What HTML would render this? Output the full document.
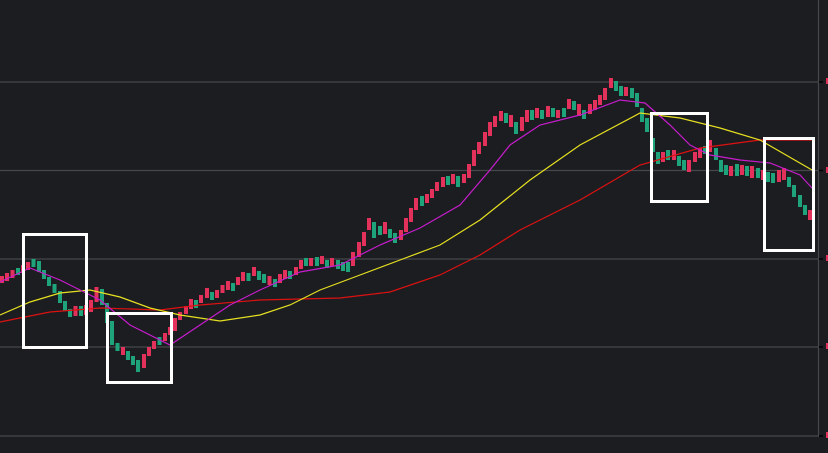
<!DOCTYPE html><html><head><style>html,body{margin:0;padding:0;background:#1c1d21;width:828px;height:453px;overflow:hidden}.r{fill:#e2315a}.g{fill:#1fa37a}</style></head><body>
<svg width="828" height="453" xmlns="http://www.w3.org/2000/svg" style="display:block">
<rect width="828" height="453" fill="#1c1d21"/>
<g stroke="#46474b" stroke-width="1.2">
<line x1="0" y1="82" x2="818" y2="82"/><line x1="0" y1="170.5" x2="818" y2="170.5"/><line x1="0" y1="259" x2="818" y2="259"/><line x1="0" y1="347" x2="818" y2="347"/><line x1="0" y1="436" x2="818" y2="436"/>
<line x1="818.5" y1="0" x2="818.5" y2="437"/></g>
<g stroke="#000" stroke-width="1.5"><line x1="819" y1="82" x2="823" y2="82"/><line x1="819" y1="170.5" x2="823" y2="170.5"/><line x1="819" y1="259" x2="823" y2="259"/><line x1="819" y1="347" x2="823" y2="347"/><line x1="819" y1="436" x2="823" y2="436"/></g>
<g fill="#e2315a"><rect x="826" y="78" width="2" height="6"/><rect x="826" y="167" width="2" height="6"/><rect x="826" y="255" width="2" height="6"/><rect x="826" y="343" width="2" height="6"/><rect x="826" y="432" width="2" height="6"/></g>
<g>
<rect class="r" x="0" y="276" width="4" height="7"/><rect class="r" x="5" y="273" width="4" height="8"/><rect class="r" x="10.5" y="270" width="4" height="8"/><rect class="g" x="16" y="268" width="4" height="7"/><rect class="r" x="21" y="265" width="4" height="8"/><rect class="r" x="26" y="262" width="4" height="8"/><rect class="g" x="31.5" y="259" width="4" height="8"/><rect class="g" x="37" y="261" width="4" height="11"/><rect class="g" x="42" y="270" width="4" height="9"/><rect class="g" x="47" y="277" width="4" height="9"/><rect class="g" x="52.5" y="284" width="4" height="9"/><rect class="g" x="58" y="291" width="4" height="12"/><rect class="g" x="63" y="301" width="4" height="10"/><rect class="g" x="68" y="309" width="4" height="8"/><rect class="r" x="73.5" y="306" width="4" height="10"/><rect class="g" x="79" y="306" width="4" height="10"/><rect class="r" x="84" y="305" width="4" height="10"/><rect class="r" x="89" y="300" width="4" height="12"/><rect class="r" x="94.5" y="287" width="4" height="15"/><rect class="g" x="100" y="289" width="4" height="16"/><rect class="g" x="105" y="303" width="4" height="20"/><rect class="g" x="110" y="321" width="4" height="24"/><rect class="g" x="115.5" y="343" width="4" height="8"/><rect class="r" x="121" y="347" width="4" height="8"/><rect class="g" x="126" y="351" width="4" height="9"/><rect class="g" x="131" y="356" width="4" height="9"/><rect class="g" x="136" y="360" width="4" height="12"/><rect class="r" x="142" y="354" width="4" height="14"/><rect class="r" x="147" y="347" width="4" height="9"/><rect class="r" x="152" y="341" width="4" height="8"/><rect class="g" x="157.5" y="337" width="4" height="8"/><rect class="r" x="163" y="333" width="4" height="8"/><rect class="r" x="168" y="327" width="4" height="8"/><rect class="r" x="173" y="318" width="4" height="13"/><rect class="r" x="178" y="312" width="4" height="8"/><rect class="r" x="184" y="306" width="4" height="8"/><rect class="r" x="189" y="299" width="4" height="10"/><rect class="g" x="194" y="300" width="4" height="8"/><rect class="r" x="199" y="295" width="4" height="8"/><rect class="r" x="205" y="288" width="4" height="10"/><rect class="g" x="210" y="292" width="4" height="8"/><rect class="r" x="215" y="290" width="4" height="8"/><rect class="r" x="220.5" y="285" width="4" height="8"/><rect class="r" x="226" y="281" width="4" height="9"/><rect class="g" x="231" y="283" width="4" height="8"/><rect class="r" x="236" y="277" width="4" height="8"/><rect class="r" x="241" y="272" width="4" height="9"/><rect class="g" x="246.5" y="273" width="4" height="8"/><rect class="r" x="252" y="267" width="4" height="9"/><rect class="g" x="257" y="271" width="4" height="9"/><rect class="g" x="262" y="274" width="4" height="9"/><rect class="r" x="267.5" y="276" width="4" height="9"/><rect class="g" x="273" y="279" width="4" height="8"/><rect class="r" x="278" y="274" width="4" height="9"/><rect class="r" x="283" y="270" width="4" height="9"/><rect class="g" x="288" y="271" width="4" height="8"/><rect class="r" x="294" y="267" width="4" height="8"/><rect class="r" x="299" y="260" width="4" height="9"/><rect class="g" x="304" y="258" width="4" height="8"/><rect class="r" x="309" y="258" width="4" height="8"/><rect class="g" x="315" y="257" width="4" height="9"/><rect class="r" x="320" y="256" width="4" height="8"/><rect class="g" x="325" y="260" width="4" height="8"/><rect class="r" x="330" y="258" width="4" height="8"/><rect class="g" x="336" y="260" width="4" height="9"/><rect class="g" x="341" y="262" width="4" height="9"/><rect class="g" x="346" y="262" width="4" height="10"/><rect class="r" x="351" y="252" width="4" height="14"/><rect class="r" x="357" y="242" width="4" height="15"/><rect class="r" x="362" y="232" width="4" height="14"/><rect class="r" x="367" y="218" width="4" height="12"/><rect class="g" x="372" y="222" width="4" height="16"/><rect class="g" x="378" y="226" width="4" height="9"/><rect class="r" x="383" y="222" width="4" height="12"/><rect class="g" x="388" y="229" width="4" height="9"/><rect class="g" x="393" y="233" width="4" height="10"/><rect class="r" x="399" y="230" width="4" height="10"/><rect class="r" x="404" y="218" width="4" height="14"/><rect class="r" x="409" y="208" width="4" height="14"/><rect class="r" x="414" y="198" width="4" height="12"/><rect class="g" x="420" y="196" width="4" height="10"/><rect class="r" x="425" y="194" width="4" height="9"/><rect class="r" x="430" y="189" width="4" height="9"/><rect class="r" x="435" y="182" width="4" height="9"/><rect class="r" x="441" y="177" width="4" height="10"/><rect class="g" x="446" y="176" width="4" height="9"/><rect class="r" x="451" y="174" width="4" height="10"/><rect class="g" x="456" y="176" width="4" height="11"/><rect class="r" x="462" y="174" width="4" height="9"/><rect class="r" x="467" y="164" width="4" height="14"/><rect class="r" x="472" y="150" width="4" height="16"/><rect class="r" x="477" y="142" width="4" height="12"/><rect class="r" x="483" y="132" width="4" height="14"/><rect class="r" x="488" y="122" width="4" height="14"/><rect class="r" x="493" y="116" width="4" height="11"/><rect class="r" x="499" y="111" width="4" height="10"/><rect class="g" x="504" y="113" width="4" height="10"/><rect class="r" x="509" y="115" width="4" height="12"/><rect class="g" x="514" y="122" width="4" height="12"/><rect class="r" x="520" y="117" width="4" height="14"/><rect class="r" x="525" y="110" width="4" height="12"/><rect class="g" x="530" y="110" width="4" height="10"/><rect class="r" x="535" y="108" width="4" height="10"/><rect class="g" x="540" y="110" width="4" height="9"/><rect class="r" x="546" y="106" width="4" height="11"/><rect class="g" x="551" y="108" width="4" height="9"/><rect class="r" x="556" y="110" width="4" height="8"/><rect class="g" x="562" y="108" width="4" height="9"/><rect class="r" x="567" y="99" width="4" height="10"/><rect class="g" x="572" y="101" width="4" height="9"/><rect class="r" x="577" y="104" width="4" height="12"/><rect class="g" x="582" y="110" width="4" height="9"/><rect class="r" x="588" y="104" width="4" height="10"/><rect class="r" x="593" y="100" width="4" height="10"/><rect class="r" x="598" y="95" width="4" height="10"/><rect class="r" x="603" y="88" width="4" height="12"/><rect class="r" x="609" y="78" width="4" height="10"/><rect class="g" x="614" y="81" width="4" height="10"/><rect class="g" x="619" y="86" width="4" height="10"/><rect class="r" x="624" y="87" width="4" height="9"/><rect class="g" x="630" y="88" width="4" height="10"/><rect class="g" x="635" y="93" width="4" height="14"/><rect class="g" x="640" y="108" width="4" height="14"/><rect class="g" x="645" y="118" width="4" height="14"/><rect class="g" x="651" y="138" width="4" height="14"/><rect class="g" x="656" y="152" width="4" height="12"/><rect class="r" x="661" y="152" width="4" height="10"/><rect class="g" x="666" y="150" width="4" height="10"/><rect class="r" x="672" y="150" width="4" height="10"/><rect class="g" x="677" y="156" width="4" height="10"/><rect class="g" x="682" y="160" width="4" height="10"/><rect class="r" x="687" y="160" width="4" height="12"/><rect class="r" x="693" y="152" width="4" height="10"/><rect class="r" x="698" y="148" width="4" height="10"/><rect class="g" x="703" y="146" width="4" height="8"/><rect class="r" x="708" y="140" width="4" height="12"/><rect class="g" x="714" y="148" width="4" height="12"/><rect class="g" x="719" y="160" width="4" height="12"/><rect class="g" x="724" y="165" width="4" height="10"/><rect class="r" x="729" y="166" width="4" height="10"/><rect class="g" x="735" y="164" width="4" height="12"/><rect class="r" x="740" y="165" width="4" height="10"/><rect class="g" x="745" y="166" width="4" height="10"/><rect class="r" x="750" y="166" width="4" height="12"/><rect class="g" x="756" y="168" width="4" height="10"/><rect class="r" x="761" y="170" width="4" height="10"/><rect class="g" x="766" y="172" width="4" height="10"/><rect class="g" x="771" y="173" width="4" height="10"/><rect class="r" x="777" y="170" width="4" height="12"/><rect class="r" x="782" y="168" width="4" height="12"/><rect class="g" x="787" y="177" width="4" height="10"/><rect class="g" x="792" y="185" width="4" height="12"/><rect class="g" x="798" y="195" width="4" height="12"/><rect class="g" x="803" y="205" width="4" height="10"/><rect class="r" x="808" y="210" width="4" height="10"/>
</g>
<g fill="none" stroke-width="1.2">
<polyline stroke="#d11" points="0,322 50,312 100,308 160,310 200,305 260,300 340,298 390,292 440,275 480,255 520,230 580,200 640,165 700,148 760,140 812,140"/>
<polyline stroke="#e6e020" points="0,315 30,302 60,293 90,290 120,297 150,308 180,315 220,321 260,315 290,305 320,290 360,275 400,260 440,245 480,220 530,180 580,145 640,113 680,118 720,128 760,140 812,170"/>
<polyline stroke="#c61ccc" points="0,282 30,268 60,280 100,300 130,325 170,345 200,325 230,305 260,290 300,272 340,265 380,245 420,228 460,205 490,170 510,145 540,125 580,115 620,100 645,103 670,125 690,145 710,155 740,160 770,163 800,175 812,188"/>
</g>
<g fill="none" stroke="#fff" stroke-width="3">
<rect x="23.5" y="234.5" width="63" height="113"/><rect x="107.5" y="313.5" width="64" height="69"/><rect x="651.5" y="113.5" width="56" height="88"/><rect x="764.5" y="138.5" width="49" height="112"/>
</g>
</svg>
</body></html>
